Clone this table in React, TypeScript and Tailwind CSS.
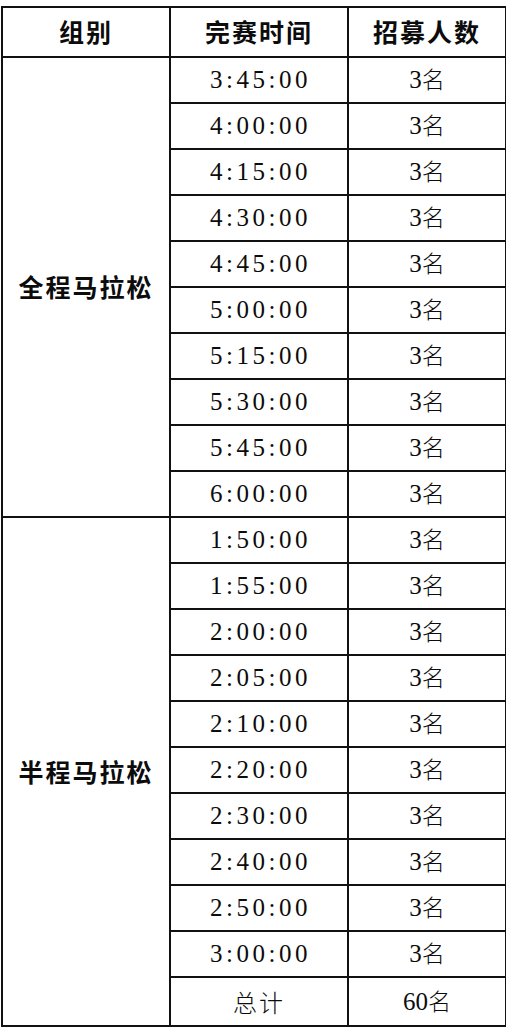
const full = ['3:45:00', '4:00:00', '4:15:00', '4:30:00', '4:45:00', '5:00:00', '5:15:00', '5:30:00', '5:45:00', '6:00:00']
const half = ['1:50:00', '1:55:00', '2:00:00', '2:05:00', '2:10:00', '2:20:00', '2:30:00', '2:40:00', '2:50:00', '3:00:00']

const serif = "font-['Liberation_Serif','Noto_Sans_CJK_SC',serif]"
const cell = 'border-2 border-[#111] text-center align-middle p-0'

function Group({ label, times }: { label: string; times: string[] }) {
  return (
    <>
      {times.map((t, i) => (
        <tr key={t} className="h-[46px]">
          {i === 0 && (
            <td
              rowSpan={label === '半程马拉松' ? 11 : 10}
              className={`${cell} text-[25px] font-bold tracking-[2px] font-['Noto_Sans_CJK_SC',sans-serif]`}
            >
              {label}
            </td>
          )}
          <td className={`${cell} ${serif} text-[25px] tracking-[3.5px] pl-[3px]`}>{t}</td>
          <td className={`${cell} ${serif} text-[25px]`}>
            3<span className="font-['Noto_Sans_CJK_SC',sans-serif] font-light text-[23px]">名</span>
          </td>
        </tr>
      ))}
    </>
  )
}

export default function App() {
  return (
    <div className="w-[506px] h-[1031px] bg-white pt-[6px] pl-[1px] text-[#0c0c0c]">
      <table className="border-collapse table-fixed w-[504px]">
        <colgroup>
          <col className="w-[168px]" />
          <col className="w-[178px]" />
          <col className="w-[158px]" />
        </colgroup>
        <thead>
          <tr className="h-[50px]">
            {['组别', '完赛时间', '招募人数'].map((h) => (
              <th
                key={h}
                className={`${cell} text-[25px] font-bold tracking-[2px] font-['Noto_Sans_CJK_SC',sans-serif]`}
              >
                {h}
              </th>
            ))}
          </tr>
        </thead>
        <tbody>
          <Group label="全程马拉松" times={full} />
          <Group label="半程马拉松" times={half} />
          <tr className="h-[49px]">
            <td className={`${cell} text-[24px] font-light tracking-[2px] font-['Noto_Sans_CJK_SC',sans-serif]`}>总计</td>
            <td className={`${cell} ${serif} text-[25px]`}>
              60<span className="font-['Noto_Sans_CJK_SC',sans-serif] font-light text-[23px]">名</span>
            </td>
          </tr>
        </tbody>
      </table>
    </div>
  )
}
